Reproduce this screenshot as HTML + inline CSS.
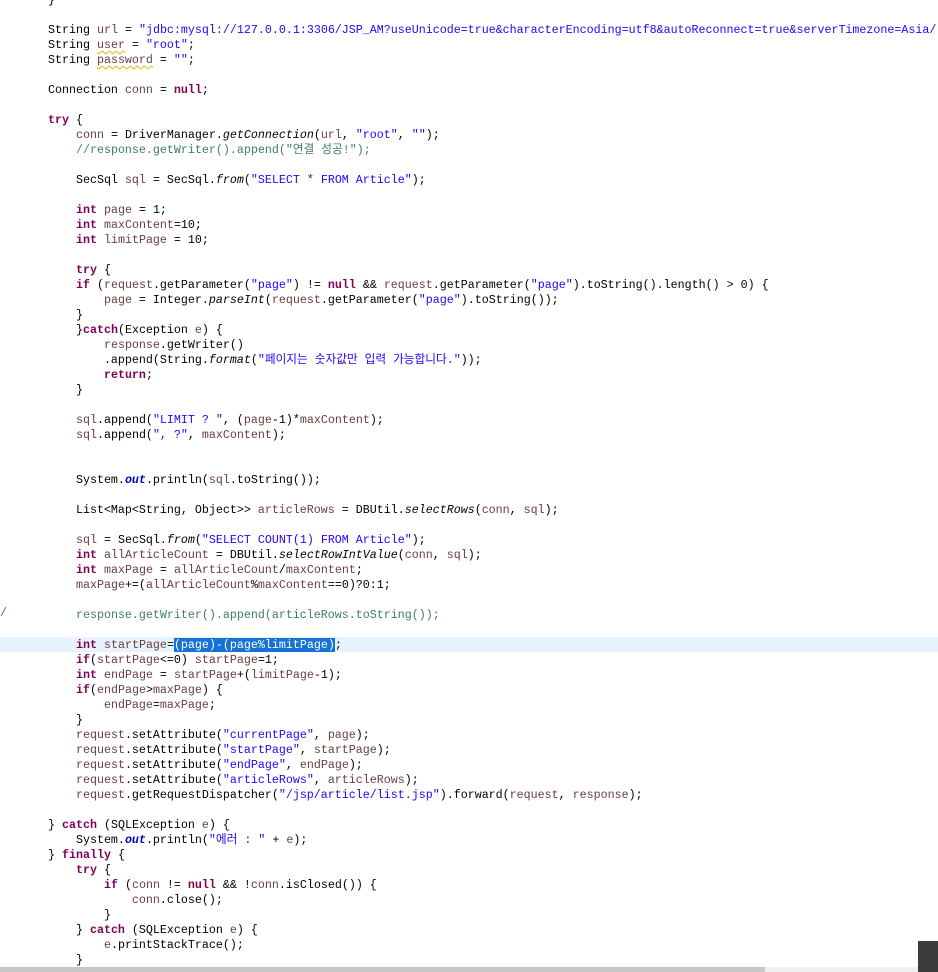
<!DOCTYPE html>
<html><head><meta charset="utf-8">
<style>
html,body{margin:0;padding:0;background:#fff;width:938px;height:972px;overflow:hidden;position:relative}
pre{margin:0;position:absolute;left:20px;top:-7px;font-family:"Liberation Mono","Noto Sans CJK KR",monospace;font-size:11.67px;line-height:15px;color:#000;white-space:pre}
.k{color:#7f0055;font-weight:bold}
.s{color:#2a00ff}
.v{color:#6a3e3e}
.c{color:#3f7f5f}
.i{font-style:italic}
.f{color:#0000c0;font-weight:bold;font-style:italic}
.w{text-decoration:underline wavy #e0b800;text-decoration-thickness:1px;text-underline-offset:2px}
.sel{background:#1672d6;color:#fff}
#cur{position:absolute;left:0;top:637px;width:938px;height:15px;background:#e8f2fe}
#track{position:absolute;left:0;top:967px;width:918px;height:5px;background:#f0f0f0}
#thumb{position:absolute;left:0;top:967px;width:765px;height:5px;background:#c8c8c8}
#box{position:absolute;left:918px;top:941px;width:20px;height:31px;background:#3c3c3c}
#sl{position:absolute;left:0;top:606px;font-family:"Liberation Mono",monospace;font-size:11.67px;line-height:15px;color:#3f7f5f}
</style></head><body>
<div id="cur"></div>
<div id="sl">/</div>
<pre>    }

    String <span class="v">url</span> = <span class="s">"jdbc:mysql://127.0.0.1:3306/JSP_AM?useUnicode=true&amp;characterEncoding=utf8&amp;autoReconnect=true&amp;serverTimezone=Asia/</span>
    String <span class="v w">user</span> = <span class="s">"root"</span>;
    String <span class="v w">password</span> = <span class="s">""</span>;

    Connection <span class="v">conn</span> = <span class="k">null</span>;

    <span class="k">try</span> {
        <span class="v">conn</span> = DriverManager.<span class="i">getConnection</span>(<span class="v">url</span>, <span class="s">"root"</span>, <span class="s">""</span>);
        <span class="c">//response.getWriter().append("연결 성공!");</span>

        SecSql <span class="v">sql</span> = SecSql.<span class="i">from</span>(<span class="s">"SELECT * FROM Article"</span>);

        <span class="k">int</span> <span class="v">page</span> = 1;
        <span class="k">int</span> <span class="v">maxContent</span>=10;
        <span class="k">int</span> <span class="v">limitPage</span> = 10;

        <span class="k">try</span> {
        <span class="k">if</span> (<span class="v">request</span>.getParameter(<span class="s">"page"</span>) != <span class="k">null</span> &amp;&amp; <span class="v">request</span>.getParameter(<span class="s">"page"</span>).toString().length() &gt; 0) {
            <span class="v">page</span> = Integer.<span class="i">parseInt</span>(<span class="v">request</span>.getParameter(<span class="s">"page"</span>).toString());
        }
        }<span class="k">catch</span>(Exception <span class="v">e</span>) {
            <span class="v">response</span>.getWriter()
            .append(String.<span class="i">format</span>(<span class="s">"페이지는 숫자값만 입력 가능합니다."</span>));
            <span class="k">return</span>;
        }

        <span class="v">sql</span>.append(<span class="s">"LIMIT ? "</span>, (<span class="v">page</span>-1)*<span class="v">maxContent</span>);
        <span class="v">sql</span>.append(<span class="s">", ?"</span>, <span class="v">maxContent</span>);


        System.<span class="f">out</span>.println(<span class="v">sql</span>.toString());

        List&lt;Map&lt;String, Object&gt;&gt; <span class="v">articleRows</span> = DBUtil.<span class="i">selectRows</span>(<span class="v">conn</span>, <span class="v">sql</span>);

        <span class="v">sql</span> = SecSql.<span class="i">from</span>(<span class="s">"SELECT COUNT(1) FROM Article"</span>);
        <span class="k">int</span> <span class="v">allArticleCount</span> = DBUtil.<span class="i">selectRowIntValue</span>(<span class="v">conn</span>, <span class="v">sql</span>);
        <span class="k">int</span> <span class="v">maxPage</span> = <span class="v">allArticleCount</span>/<span class="v">maxContent</span>;
        <span class="v">maxPage</span>+=(<span class="v">allArticleCount</span>%<span class="v">maxContent</span>==0)?0:1;

        <span class="c">response.getWriter().append(articleRows.toString());</span>

        <span class="k">int</span> <span class="v">startPage</span>=<span class="sel">(page)-(page%limitPage)</span>;
        <span class="k">if</span>(<span class="v">startPage</span>&lt;=0) <span class="v">startPage</span>=1;
        <span class="k">int</span> <span class="v">endPage</span> = <span class="v">startPage</span>+(<span class="v">limitPage</span>-1);
        <span class="k">if</span>(<span class="v">endPage</span>&gt;<span class="v">maxPage</span>) {
            <span class="v">endPage</span>=<span class="v">maxPage</span>;
        }
        <span class="v">request</span>.setAttribute(<span class="s">"currentPage"</span>, <span class="v">page</span>);
        <span class="v">request</span>.setAttribute(<span class="s">"startPage"</span>, <span class="v">startPage</span>);
        <span class="v">request</span>.setAttribute(<span class="s">"endPage"</span>, <span class="v">endPage</span>);
        <span class="v">request</span>.setAttribute(<span class="s">"articleRows"</span>, <span class="v">articleRows</span>);
        <span class="v">request</span>.getRequestDispatcher(<span class="s">"/jsp/article/list.jsp"</span>).forward(<span class="v">request</span>, <span class="v">response</span>);

    } <span class="k">catch</span> (SQLException <span class="v">e</span>) {
        System.<span class="f">out</span>.println(<span class="s">"에러 : "</span> + <span class="v">e</span>);
    } <span class="k">finally</span> {
        <span class="k">try</span> {
            <span class="k">if</span> (<span class="v">conn</span> != <span class="k">null</span> &amp;&amp; !<span class="v">conn</span>.isClosed()) {
                <span class="v">conn</span>.close();
            }
        } <span class="k">catch</span> (SQLException <span class="v">e</span>) {
            <span class="v">e</span>.printStackTrace();
        }
</pre>
<div id="track"></div>
<div id="thumb"></div>
<div id="box"></div>
</body></html>
